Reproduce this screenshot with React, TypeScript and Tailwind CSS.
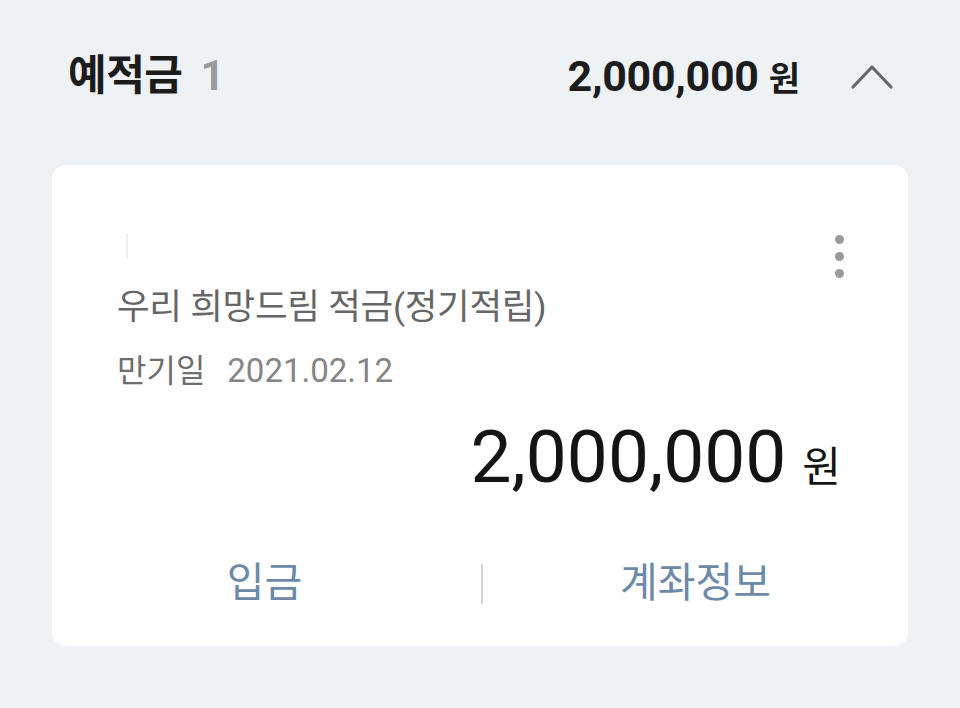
export default function App() {
  const font = { fontFamily: 'Roboto, "Noto Sans CJK KR", sans-serif' };
  return (
    <div className="w-[960px] h-[708px] bg-[#eef2f5] overflow-hidden" style={font}>
      <div className="flex items-center h-[152px] pl-[68px] pr-[66px]">
        <div className="flex items-baseline gap-[18px] -mt-[2px]">
          <span className="text-[42px] font-bold text-[#1c1c1c] tracking-[-0.5px]">예적금</span>
          <span className="text-[42px] font-bold text-[#9a9a9a]">1</span>
        </div>
        <div className="ml-auto flex items-baseline gap-[10px]">
          <span className="text-[43px] font-bold text-[#1c1c1c] tracking-[-0.3px]">2,000,000</span>
          <span className="text-[34px] font-bold text-[#1c1c1c]">원</span>
        </div>
        <svg className="ml-[50px]" width="44" height="28" viewBox="0 0 44 28" fill="none">
          <path d="M3 25 L22 5 L41 25" stroke="#666" strokeWidth="3.2" strokeLinecap="round" strokeLinejoin="round" />
        </svg>
      </div>

      <div className="mx-[52px] mt-[13px] bg-white rounded-[14px] h-[481px] relative">
        <div className="absolute left-[74px] top-[68px] w-[2px] h-[26px] bg-[#f0f0f0]" />
        <div className="absolute right-[64px] top-[70px] flex flex-col gap-[8px]">
          <span className="w-[9px] h-[9px] rounded-full bg-[#9a9a9a]" />
          <span className="w-[9px] h-[9px] rounded-full bg-[#9a9a9a]" />
          <span className="w-[9px] h-[9px] rounded-full bg-[#9a9a9a]" />
        </div>
        <div className="pl-[65px] pr-[66px] pt-[118px]">
          <div className="text-[35.5px] text-[#666] leading-[48px] tracking-[-0.3px]">우리 희망드림 적금(정기적립)</div>
          <div className="flex items-baseline gap-[22px] mt-[18px] leading-[44px]">
            <span className="text-[32px] text-[#6e6e6e]">만기일</span>
            <span className="text-[33px] text-[#858585]">2021.02.12</span>
          </div>
          <div className="flex items-baseline justify-end gap-[16px] mt-[19px] pr-[1px]">
            <span className="text-[73px] text-[#141414] leading-[90px]">2,000,000</span>
            <span className="text-[42px] text-[#141414]">원</span>
          </div>
        </div>
        <div className="absolute left-0 right-0 top-[398px] flex items-center h-[42px]">
          <div className="flex-1 flex justify-center pr-[4px]">
            <span className="text-[41px] text-[#6c8aa8]">입금</span>
          </div>
          <div className="w-[2px] h-[40px] bg-[#d4d4d4]" />
          <div className="flex-1 flex justify-center">
            <span className="text-[41px] text-[#6c8aa8]">계좌정보</span>
          </div>
        </div>
      </div>
    </div>
  );
}
